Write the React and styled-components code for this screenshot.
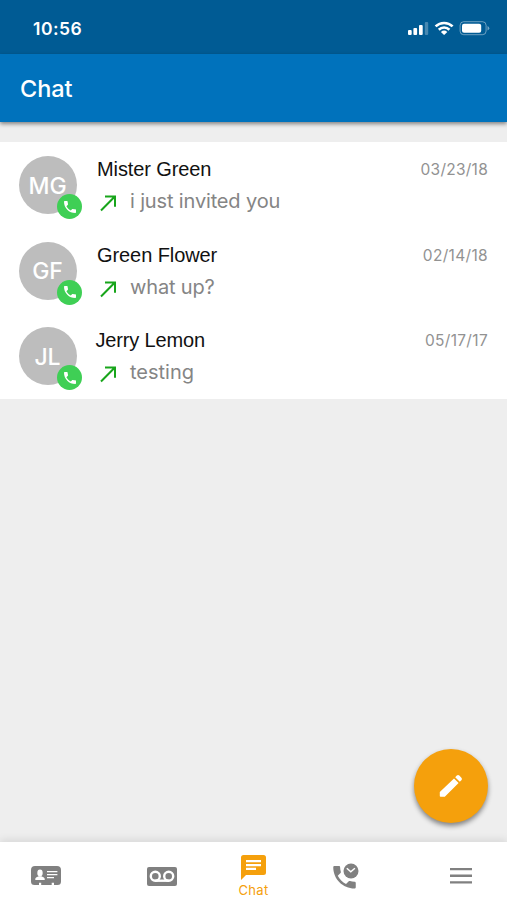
import styled, { createGlobalStyle } from "styled-components"

const GlobalStyle = createGlobalStyle`
    * {
        box-sizing: border-box;
    }
    body {
        margin: 0;
        background: #eeeeee;
        font-family: Inter, "Liberation Sans", sans-serif;
    }
    svg {
        display: block;
        flex-shrink: 0;
    }
`

const Screen = styled.div`
    position: relative;
    display: flex;
    flex-direction: column;
    width: 100%;
    height: 900px;
    overflow: hidden;
    background: #eeeeee;
`

const StatusBar = styled.div`
    display: flex;
    justify-content: space-between;
    align-items: center;
    height: 54px;
    padding: 3px 17px 0 33px;
    background: #005b94;
    color: #fff;
`

const Time = styled.div`
    font-size: 17.5px;
    font-weight: 600;
    letter-spacing: 0.5px;
`

const Header = styled.div`
    display: flex;
    align-items: center;
    height: 68px;
    padding: 0 20px;
    background: #0072bc;
    color: #fff;
    font-size: 23.5px;
    font-weight: 500;
    letter-spacing: -0.1px;
    box-shadow: 0 2px 4px rgba(0, 0, 0, 0.45);
`

const ChatList = styled.div`
    display: flex;
    flex-direction: column;
    height: 257px;
    margin-top: 20px;
    background: #fff;
`

const Row = styled.div`
    display: flex;
    flex: 1;
    padding: 14px 19px 0;
`

const Avatar = styled.div`
    position: relative;
    display: flex;
    justify-content: center;
    align-items: center;
    width: 58px;
    height: 58px;
    padding: 1px 1px 0 0;
    border-radius: 50%;
    background: #bdbdbd;
    color: #fff;
    font-size: 23px;
    font-weight: 500;
`

const Badge = styled.div`
    position: absolute;
    right: -5px;
    bottom: -5px;
    display: flex;
    justify-content: center;
    align-items: center;
    width: 25px;
    height: 25px;
    border-radius: 50%;
    background: #3fcf55;
`

const Details = styled.div`
    flex: 1;
    padding-left: ${props => props.$inset}px;
`

const Name = styled.div`
    height: 28px;
    color: #111;
    font-family: "Liberation Sans", Arial, sans-serif;
    font-size: 20px;
    line-height: 27px;
    letter-spacing: ${props => props.$spacing}px;
`

const Message = styled.div`
    display: flex;
    align-items: center;
    height: 34px;
    margin-left: ${props => 20 - props.$inset}px;
    padding-left: 3px;
    gap: 12px;
    color: #858585;
    font-size: 20px;
    line-height: 34px;
    letter-spacing: ${props => props.$spacing}px;

    svg {
        margin-top: 4px;
    }
`

const SentDate = styled.div`
    height: 26px;
    color: #929292;
    font-size: 15.5px;
    line-height: 27px;
    letter-spacing: ${props => props.$spacing}px;
`

const ComposeButton = styled.button`
    position: absolute;
    right: 19px;
    bottom: 77px;
    display: flex;
    justify-content: center;
    align-items: center;
    width: 74px;
    height: 74px;
    padding: 0;
    border: 0;
    border-radius: 50%;
    background: #f5a00c;
    box-shadow: 0 3px 5px rgba(0, 0, 0, 0.45);
`

const TabBar = styled.div`
    display: grid;
    grid-template-columns: 92px 140px 43px 141px 90px;
    align-items: center;
    height: 58px;
    margin-top: auto;
    padding-top: 10px;
    background: #fff;
    box-shadow: 0 -2px 8px rgba(0, 0, 0, 0.1);
`

const Tab = styled.div`
    display: flex;
    flex-direction: column;
    justify-content: center;
    align-items: center;
    height: 48px;
    color: ${props => props.$active ? '#f5a00c' : '#808080'};
`

const TabLabel = styled.div`
    margin-top: 2px;
    font-size: 13px;
    line-height: 16px;
    letter-spacing: 0.3px;
`

const chats = [
    {initials: 'MG', name: 'Mister Green', message: 'i just invited you', date: '03/23/18', inset: 20, nameSpacing: -0.1, messageSpacing: -0.15, dateSpacing: 0.25},
    {initials: 'GF', name: 'Green Flower', message: 'what up?', date: '02/14/18', inset: 20, nameSpacing: -0.08, messageSpacing: -0.15, dateSpacing: 0.32},
    {initials: 'JL', name: 'Jerry Lemon', message: 'testing', date: '05/17/17', inset: 18.5, nameSpacing: -0.15, messageSpacing: 0, dateSpacing: 0.32},
]

const handset = "M6.62 10.79c1.44 2.83 3.76 5.14 6.59 6.59l2.2-2.2c.27-.27.67-.36 1.02-.24 1.12.37 2.33.57 3.57.57.55 0 1 .45 1 1V20c0 .55-.45 1-1 1C10.61 21 3 13.39 3 4c0-.55.45-1 1-1h3.5c.55 0 1 .45 1 1 0 1.25.2 2.45.57 3.57.11.35.03.74-.25 1.02z"

function StatusIcons() {
  return (
      <svg width="83" height="16" viewBox="0 0 83 16" fill="#fff">
          <rect x="1" y="9" width="3.7" height="5" rx="1" />
          <rect x="6.4" y="7" width="3.7" height="7" rx="1" />
          <rect x="12" y="4" width="3.7" height="10" rx="1" />
          <rect x="17.8" y="1" width="3.4" height="13" rx="1" opacity="0.28" />
          <g fill="none" stroke="#fff" strokeWidth="2.6">
              <path d="M28.6 5.4a12.2 12.2 0 0 1 17 0" />
              <path d="M31.8 8.7a7.6 7.6 0 0 1 10.6 0" />
          </g>
          <path d="M33.9 10.9a4.7 4.7 0 0 1 6.4 0L37.1 14z" />
          <rect x="53.1" y="0.7" width="26" height="13" rx="3.6" fill="none" stroke="#fff" opacity="0.42" />
          <rect x="55" y="2.7" width="19.2" height="9" rx="2" />
          <path d="M80.5 5v4.4q1.8-.7 1.8-2.2T80.5 5z" opacity="0.45" />
      </svg>
  );
}

function ContactIcon() {
  return (
      <svg width="30" height="20" viewBox="0 0 30 20">
          <path fill="currentColor" d="M4 0h22a4 4 0 0 1 4 4v11.5a3.5 3.5 0 0 1-3.5 3.5H23v-2.2h-2.3V19H10.2v-2.2H8V19H3.5A3.5 3.5 0 0 1 0 15.5V4a4 4 0 0 1 4-4z" />
          <ellipse cx="9" cy="7" rx="2.7" ry="3.4" fill="#fff" />
          <path fill="#fff" d="M4.3 14v-1.2c0-1.5 2.1-2.1 3.4-2.6h2.6c1.3.5 3.4 1.1 3.4 2.6V14zM16 5h10.4v1.2H16zM16 8h10.4v1.2H16zM16 11h7v1.2h-7z" />
      </svg>
  );
}

function VoicemailIcon() {
  return (
      <svg width="30" height="19" viewBox="0 0 30 19">
          <rect width="30" height="19" rx="2" fill="currentColor" />
          <g fill="none" stroke="#fff" strokeWidth="2.4">
              <circle cx="8.3" cy="9.2" r="4.5" />
              <circle cx="21.7" cy="9.2" r="4.5" />
              <path d="M8.3 13.7h13.4" />
          </g>
      </svg>
  );
}

function ChatIcon() {
  return (
      <svg width="25" height="25" viewBox="0 0 25 25">
          <path fill="currentColor" d="M2.5 0h20A2.5 2.5 0 0 1 25 2.5v15a2.5 2.5 0 0 1-2.5 2.5H5l-5 5V2.5A2.5 2.5 0 0 1 2.5 0z" />
          <path fill="#fff" d="M5 5h15v2.2H5zM5 9h15v2.2H5zM5 12.8h10V15H5z" />
      </svg>
  );
}

function HistoryIcon() {
  return (
      <svg width="26" height="26" viewBox="0 0 26 26">
          <path fill="currentColor" transform="translate(-3.5 -.7) scale(1.25)" d={handset} />
          <circle cx="18" cy="8" r="8.2" fill="#fff" />
          <circle cx="18" cy="8" r="7.5" fill="currentColor" />
          <path d="M13.8 5.2l4 3.6 4.1-3.5" fill="none" stroke="#fff" strokeWidth="1.5" />
      </svg>
  );
}

function ChatRow({ chat }) {
  return (
      <Row>
          <Avatar>
              {chat.initials}
              <Badge>
                  <svg width="16" height="16" viewBox="0 0 24 24" fill="#fff"><path d={handset} /></svg>
              </Badge>
          </Avatar>
          <Details $inset={chat.inset}>
              <Name $spacing={chat.nameSpacing}>{chat.name}</Name>
              <Message $inset={chat.inset} $spacing={chat.messageSpacing}>
                  <svg width="18" height="18" viewBox="0 0 18 18" fill="none" stroke="#18a51b" strokeWidth="2">
                      <path d="M1 16.5L14.6 2.7M5 2.4h10v10.3" />
                  </svg>
                  {chat.message}
              </Message>
          </Details>
          <SentDate $spacing={chat.dateSpacing}>{chat.date}</SentDate>
      </Row>
  );
}

function App() {
  return (
      <Screen>
        <GlobalStyle />
        <StatusBar>
            <Time>10:56</Time>
            <StatusIcons />
        </StatusBar>
        <Header>Chat</Header>
        <ChatList>
            {chats.map(chat => <ChatRow key={chat.name} chat={chat} />)}
        </ChatList>
        <TabBar>
            <Tab><ContactIcon /></Tab>
            <Tab><VoicemailIcon /></Tab>
            <Tab $active>
                <ChatIcon />
                <TabLabel>Chat</TabLabel>
            </Tab>
            <Tab><HistoryIcon /></Tab>
            <Tab>
                <svg width="22" height="16" viewBox="0 0 22 16" fill="currentColor">
                    <path d="M0 0h22v2.3H0zM0 6.6h22v2.3H0zM0 13.2h22v2.3H0z" />
                </svg>
            </Tab>
        </TabBar>
        <ComposeButton aria-label="New message">
            <svg width="24" height="24" viewBox="0 0 24 24" fill="#fff">
                <path d="M.8 18L15 4.4l4.6 4.5L5.8 22.8H1.6a.8.8 0 0 1-.8-.8zM16.2 3.2l1.6-1.6a1.8 1.8 0 0 1 2.5 0l2.1 2.1a1.8 1.8 0 0 1 0 2.5l-1.6 1.6z" />
            </svg>
        </ComposeButton>
      </Screen>
  );
}

export default App;
